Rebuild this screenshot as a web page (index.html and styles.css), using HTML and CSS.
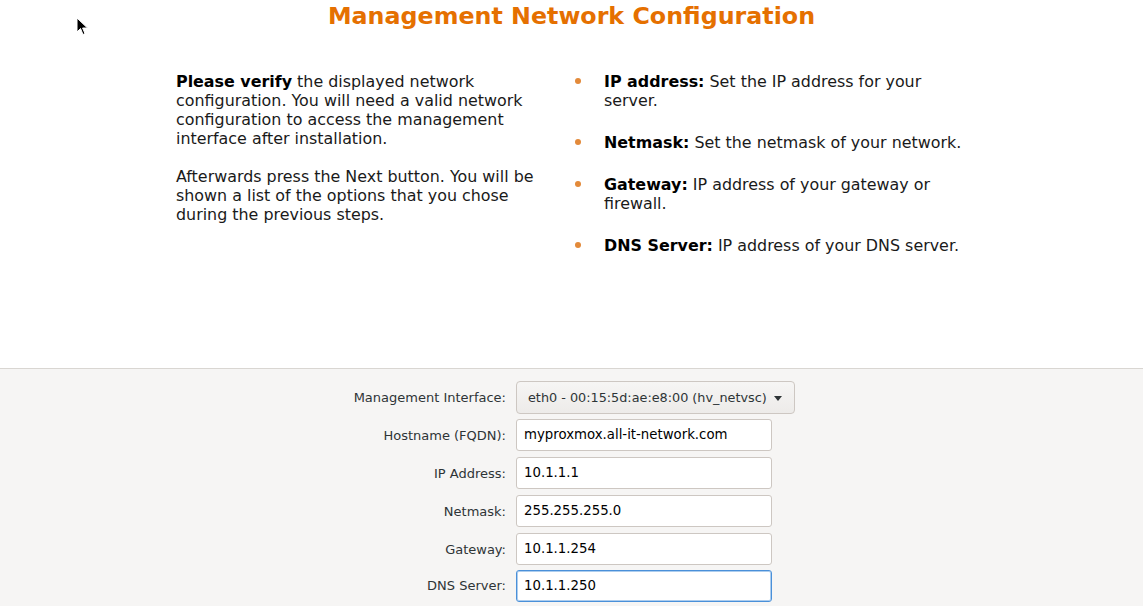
FILE: index.html
```html
<!DOCTYPE html>
<html>
<head>
<meta charset="utf-8">
<link rel="stylesheet" href="styles.css">
</head>
<body>
<div class="page">
  <section class="intro">
    <h1 class="title">Management Network Configuration</h1>
    <div class="columns">
      <div class="left">
        <p><b>Please verify</b> the displayed network configuration. You will need a valid network configuration to access the management interface after installation.</p>
        <p>Afterwards press the Next button. You will be shown a list of the options that you chose during the previous steps.</p>
      </div>
      <ul class="right">
        <li><b>IP address:</b> Set the IP address for your server.</li>
        <li><b>Netmask:</b> Set the netmask of your network.</li>
        <li><b>Gateway:</b> IP address of your gateway or firewall.</li>
        <li><b>DNS Server:</b> IP address of your DNS server.</li>
      </ul>
    </div>
  </section>
  <section class="panel">
    <div class="form">
      <label class="lbl">Management Interface:</label>
      <div class="combo"><span>eth0 - 00:15:5d:ae:e8:00 (hv_netvsc)</span><span class="arrow"></span></div>
      <label class="lbl">Hostname (FQDN):</label>
      <div class="entry">myproxmox.all-it-network.com</div>
      <label class="lbl">IP Address:</label>
      <div class="entry">10.1.1.1</div>
      <label class="lbl">Netmask:</label>
      <div class="entry">255.255.255.0</div>
      <label class="lbl">Gateway:</label>
      <div class="entry">10.1.1.254</div>
      <label class="lbl last">DNS Server:</label>
      <div class="entry focus last">10.1.1.250</div>
    </div>
  </section>
  <svg class="cursor" width="13" height="20" viewBox="0 0 13 20"><path d="M1 1 L1 15 L4.5 11.5 L7 17.5 L9 16.6 L6.6 11 L11.5 11 Z" fill="#000" stroke="#fff" stroke-width="1"/></svg>
</div>
</body>
</html>
```
FILE: styles.css
```css
html, body {
  margin: 0;
  padding: 0;
  background: #ffffff;
}
body {
  font-family: "DejaVu Sans", "Liberation Sans", sans-serif;
  color: #000;
}
.page {
  position: relative;
  width: 1143px;
  height: 606px;
  overflow: hidden;
  display: flex;
  flex-direction: column;
}
.intro {
  height: 368px;
  flex: none;
}
.title {
  margin: 0;
  padding-top: 1px;
  text-align: center;
  font-size: 23.75px;
  line-height: 30px;
  font-weight: bold;
  color: #e57000;
}
.columns {
  display: grid;
  grid-template-columns: 390px 400px;
  padding-left: 176px;
  padding-top: 41px;
  font-size: 15.9px;
  line-height: 19px;
  color: #1a1a1a;
}
.left p {
  margin: 0 0 19px 0;
  width: 362px;
}
.left b, .right b {
  color: #000;
}
.right {
  list-style: none;
  margin: 0;
  padding: 0 0 0 38px;
}
.right li {
  position: relative;
  width: 370px;
  margin-bottom: 23px;
}
.right li::before {
  content: "";
  position: absolute;
  left: -29px;
  top: 6px;
  width: 6px;
  height: 6px;
  border-radius: 50%;
  background: #e38a3a;
}
.panel {
  flex: 1;
  background: #f6f5f4;
  border-top: 1px solid #d9d6d2;
  padding-top: 12px;
}
.form {
  display: grid;
  grid-template-columns: 506px auto;
  column-gap: 10px;
  row-gap: 6px;
  justify-content: start;
  align-items: center;
  font-size: 13px;
}
.lbl {
  text-align: right;
  color: #2e3436;
}
.combo {
  justify-self: start;
  display: flex;
  align-items: center;
  gap: 7px;
  height: 31px;
  margin-bottom: -1px;
  padding: 0 12px 0 11px;
  border: 1px solid #cdc7c2;
  border-radius: 4px;
  background: linear-gradient(#f6f5f4, #edebe9);
  color: #2e3436;
  font-size: 12.8px;
}
.arrow {
  width: 0;
  height: 0;
  border-left: 4px solid transparent;
  border-right: 4px solid transparent;
  border-top: 5px solid #2e3436;
  margin-top: 1px;
}
.entry {
  width: 247px;
  height: 30px;
  line-height: 30px;
  padding-left: 7px;
  border: 1px solid #cdc7c2;
  border-radius: 3px;
  background: #fff;
  color: #000;
  font-size: 13.3px;
}
.last {
  margin-top: -1px;
}
.lbl.last {
  margin-top: -3px;
}
.entry.focus {
  border-color: #4a90d9;
  box-shadow: inset 0 0 0 1px rgba(74, 144, 217, 0.45);
}
.cursor {
  position: absolute;
  left: 76px;
  top: 17px;
}
```
